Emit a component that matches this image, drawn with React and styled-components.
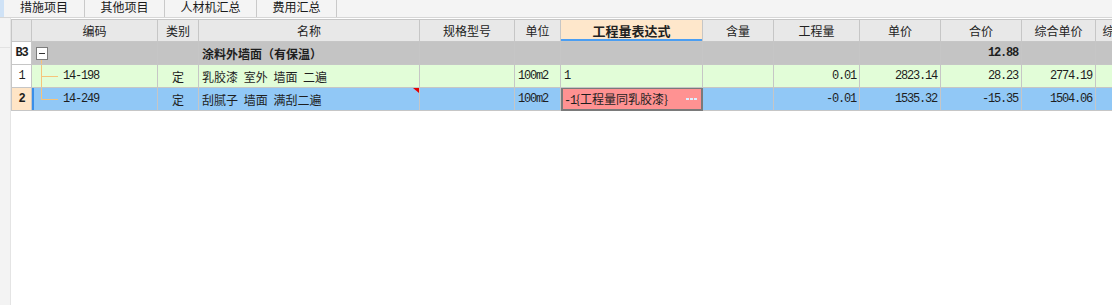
import React from 'react'
import styled, { createGlobalStyle, css } from 'styled-components'

const GlobalStyle = createGlobalStyle`
  html, body {
    margin: 0;
    padding: 0;
    background: #fff;
    overflow: hidden;
  }
  body {
    font-family: "Noto Sans CJK SC", "Liberation Sans", sans-serif;
    font-size: 12px;
    color: #1e1e1e;
  }
`

const template = '21px 126px 41px 221px 95px 46px 142px 71px 86px 81px 81px 74px 62px'

const tabs = [
    { label: '措施项目', width: 81 },
    { label: '其他项目', width: 80 },
    { label: '人材机汇总', width: 92 },
    { label: '费用汇总', width: 80 },
]

const headers = ['', '编码', '类别', '名称', '规格型号', '单位', '工程量表达式', '含量', '工程量', '单价', '合价', '综合单价', '综合合价']

function TreeGuide({ last }) {
    return (
        <svg width="26" height="22" viewBox="0 0 26 22">
            <line x1="9.5" y1="0" x2="9.5" y2={last ? 11.5 : 22} stroke="#f6c47a" strokeWidth="1" />
            <line x1="9.5" y1="11.5" x2="26" y2="11.5" stroke="#f6c47a" strokeWidth="1" />
        </svg>
    )
}

export default function App() {
    return (
        <Page>
            <GlobalStyle />
            <TabBar>
                <TabStrip />
                {tabs.map(t => (
                    <Tab key={t.label} $width={t.width}>{t.label}</Tab>
                ))}
            </TabBar>
            <Main>
                <Gutter>
                    <GutterTop />
                </Gutter>
                <Content>
                    <Row>
                        {headers.map((h, i) => (
                            <HeadCell key={i} $first={i === 0} $active={h === '工程量表达式'}>{h}</HeadCell>
                        ))}
                    </Row>

                    <Row $bg="#c4c4c4">
                        <Cell $first $bg="#fff" $align="center"><Mono $bold>B3</Mono></Cell>
                        <Cell $pl={4}><Toggle /></Cell>
                        <Cell />
                        <Cell><Bold>涂料外墙面（有保温）</Bold></Cell>
                        <Cell />
                        <Cell />
                        <Cell />
                        <Cell />
                        <Cell />
                        <Cell />
                        <Cell $align="right"><Mono $bold>12.88</Mono></Cell>
                        <Cell />
                        <Cell />
                    </Row>

                    <Row $bg="#e2fdd8">
                        <Cell $first $bg="#fff" $align="center"><Mono>1</Mono></Cell>
                        <Cell $pl={0}><TreeGuide /><Mono $ml={5}>14-198</Mono></Cell>
                        <Cell $align="center">定</Cell>
                        <Cell><Spaced>乳胶漆 室外 墙面 二遍</Spaced></Cell>
                        <Cell />
                        <Cell><Mono>100m2</Mono></Cell>
                        <Cell><Mono>1</Mono></Cell>
                        <Cell />
                        <Cell $align="right"><Mono>0.01</Mono></Cell>
                        <Cell $align="right"><Mono>2823.14</Mono></Cell>
                        <Cell $align="right"><Mono>28.23</Mono></Cell>
                        <Cell $align="right"><Mono>2774.19</Mono></Cell>
                        <Cell />
                    </Row>

                    <Row $bg="#91c8f6">
                        <Cell $first $bg="#ffe5c6" $align="center"><Mono $bold>2</Mono></Cell>
                        <Cell $pl={0} $selected><TreeGuide last /><Mono $ml={5}>14-249</Mono></Cell>
                        <Cell $align="center">定</Cell>
                        <Cell><Spaced>刮腻子 墙面 满刮二遍</Spaced><NoteMark /></Cell>
                        <Cell />
                        <Cell><Mono>100m2</Mono></Cell>
                        <EditCell>
                            <span><Mono>-1</Mono>{'{工程量同乳胶漆}'}</span>
                            <MoreDots />
                        </EditCell>
                        <Cell />
                        <Cell $align="right"><Mono>-0.01</Mono></Cell>
                        <Cell $align="right"><Mono>1535.32</Mono></Cell>
                        <Cell $align="right"><Mono>-15.35</Mono></Cell>
                        <Cell $align="right"><Mono>1504.06</Mono></Cell>
                        <Cell />
                    </Row>
                </Content>
            </Main>
        </Page>
    )
}

const Page = styled.div`
    width: 100vw;
    height: 100vh;
    display: flex;
    flex-direction: column;
    overflow: hidden;
`

const TabBar = styled.div`
    display: flex;
    height: 17px;
    flex-shrink: 0;
    background: #f4f4f4;
    border-bottom: 1px solid #d6d6d6;
`

const TabStrip = styled.div`
    width: 4px;
    background: #cfe2f6;
`

const Tab = styled.div`
    width: ${p => p.$width}px;
    box-sizing: border-box;
    border-right: 1px solid #c9c9c9;
    text-align: center;
    line-height: 14px;
    font-size: 12px;
    color: #1a1a1a;
`

const Main = styled.div`
    flex: 1;
    display: flex;
    min-height: 0;
`

const Gutter = styled.div`
    width: 10px;
    flex-shrink: 0;
    background: #f3f3f3;
    border-right: 1px solid #e4e4e4;
`

const GutterTop = styled.div`
    height: 29px;
    border-bottom: 1px solid #e2e2e2;
`

const Content = styled.div`
    flex: 1;
    min-width: 0;
    padding-top: 1px;
    background: #fff;
    overflow: hidden;
`

const Row = styled.div`
    display: grid;
    grid-template-columns: ${template};
    height: 23px;
    background: ${p => p.$bg || 'transparent'};
`

const cellBase = css`
    box-sizing: border-box;
    display: flex;
    align-items: center;
    border-right: 1px solid #c6c6c6;
    border-bottom: 1px solid #c6c6c6;
    white-space: nowrap;
    overflow: hidden;
    ${p => p.$first && 'border-left: 1px solid #c6c6c6;'}
`

const HeadCell = styled.div`
    ${cellBase}
    justify-content: center;
    border-top: 1px solid #c6c6c6;
    background: ${p => (p.$active ? '#fee7cb' : '#e8e8e8')};
    font-size: ${p => (p.$active ? '13px' : '12px')};
    font-weight: ${p => (p.$active ? 'bold' : 'normal')};
    color: #222;
    ${p => p.$active && 'box-shadow: inset 0 -2px 0 #4b9ef2;'}
`

const Cell = styled.div`
    ${cellBase}
    position: relative;
    padding: 0 3px 0 ${p => (p.$pl !== undefined ? p.$pl : 3)}px;
    justify-content: ${p => (p.$align === 'right' ? 'flex-end' : p.$align === 'center' ? 'center' : 'flex-start')};
    background: ${p => p.$bg || 'transparent'};
    ${p => p.$selected && 'box-shadow: inset 2px 0 0 #3a8fe9;'}
`

const EditCell = styled.div`
    ${cellBase}
    justify-content: space-between;
    padding: 0 5px 0 3px;
    background: #ff9292;
    border-color: #7a7a7a;
    box-shadow: inset 2px 2px 0 #7a7a7a, inset -1px -1px 0 #7a7a7a;
    margin-top: -1px;
    height: 24px;
`

const MoreDots = styled.span`
    width: 11px;
    height: 2px;
    background: repeating-linear-gradient(to right, #dcefff 0 3px, transparent 3px 4px);
`

const Mono = styled.span`
    font-family: "Liberation Mono", "DejaVu Sans Mono", monospace;
    font-size: 12px;
    letter-spacing: -1.2px;
    font-weight: ${p => (p.$bold ? 'bold' : 'normal')};
    margin-left: ${p => p.$ml || 0}px;
`

const Bold = styled.span`
    font-weight: bold;
`

const Spaced = styled.span`
    word-spacing: 3px;
`

const Toggle = styled.span`
    position: relative;
    width: 12px;
    height: 13px;
    box-sizing: border-box;
    border: 1px solid #7d7d7d;
    background: #fff;
    display: flex;
    align-items: center;
    justify-content: center;

    &::before {
        content: '';
        width: 6px;
        height: 1px;
        background: #333;
    }

    &::after {
        content: '';
        position: absolute;
        left: 4px;
        top: 12px;
        width: 1px;
        height: 6px;
        background: #f6c47a;
    }
`

const NoteMark = styled.span`
    position: absolute;
    top: 0;
    right: 0;
    width: 0;
    height: 0;
    border-top: 5px solid #e40000;
    border-left: 6px solid transparent;
`
